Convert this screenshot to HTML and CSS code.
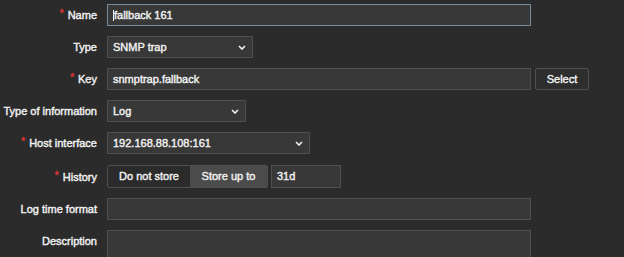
FILE: index.html
```html
<!DOCTYPE html>
<html>
<head>
<meta charset="utf-8">
<link rel="stylesheet" href="styles.css">
</head>
<body>
<form class="form">
  <div class="row">
    <label class="label"><span class="req">*</span>Name</label>
    <div class="input input-wide input-focus"><span class="caret"></span>fallback 161</div>
  </div>
  <div class="row">
    <label class="label">Type</label>
    <div class="select select-type"><span>SNMP trap</span><svg class="chev" width="8" height="5" viewBox="0 0 8 5"><path d="M1 1 L4 4 L7 1" fill="none" stroke="#f2f2f2" stroke-width="1.6"/></svg></div>
  </div>
  <div class="row">
    <label class="label"><span class="req">*</span>Key</label>
    <div class="input input-wide">snmptrap.fallback</div>
    <div class="btn">Select</div>
  </div>
  <div class="row">
    <label class="label">Type of information</label>
    <div class="select select-info"><span>Log</span><svg class="chev" width="8" height="5" viewBox="0 0 8 5"><path d="M1 1 L4 4 L7 1" fill="none" stroke="#f2f2f2" stroke-width="1.6"/></svg></div>
  </div>
  <div class="row">
    <label class="label"><span class="req">*</span>Host interface</label>
    <div class="select select-host"><span>192.168.88.108:161</span><svg class="chev" width="8" height="5" viewBox="0 0 8 5"><path d="M1 1 L4 4 L7 1" fill="none" stroke="#f2f2f2" stroke-width="1.6"/></svg></div>
  </div>
  <div class="row row-history">
    <label class="label"><span class="req">*</span>History</label>
    <div class="seg">
      <div class="seg-item">Do not store</div>
      <div class="seg-item seg-on">Store up to</div>
    </div>
    <div class="input input-short">31d</div>
  </div>
  <div class="row">
    <label class="label">Log time format</label>
    <div class="input input-wide"></div>
  </div>
  <div class="row row-top">
    <label class="label">Description</label>
    <div class="input input-wide textarea"></div>
  </div>
</form>
</body>
</html>
```

FILE: styles.css
```css
html, body {
  margin: 0;
  padding: 0;
  background: #2b2b2b;
}
body {
  font-family: "Liberation Sans", Arial, sans-serif;
  font-size: 11px;
  color: #f2f2f2;
  -webkit-text-stroke: 0.4px #f2f2f2;
}
.form {
  padding-top: 4px;
  display: flex;
  flex-direction: column;
  gap: 10px;
}
.row {
  display: flex;
  align-items: center;
  gap: 10px;
}
.row-history {
  margin-top: 1px;
}
.row-top {
  align-items: flex-start;
}
.row-top .label {
  line-height: 22px;
}
.label {
  width: 97px;
  flex: none;
  text-align: right;
  white-space: nowrap;
  color: #f2f2f2;
}
.req {
  color: #e33734;
  -webkit-text-stroke: 0.3px #e33734;
  font-size: 10px;
  position: relative;
  top: -2px;
  margin-right: 4px;
}
.input, .select, .btn {
  box-sizing: border-box;
  height: 22px;
  line-height: 20px;
  border: 1px solid #4f4f4f;
  background: #383838;
  color: #f2f2f2;
  padding: 0 5px;
  white-space: nowrap;
}
.input-wide {
  width: 424px;
}
.input-focus {
  border-color: #768d99;
}
.caret {
  display: inline-block;
  width: 1px;
  height: 11px;
  background: #f2f2f2;
  vertical-align: -2px;
}
.btn {
  margin-left: -6px;
  width: 54px;
  text-align: center;
  background: #2e2e2e;
  border-radius: 2px;
  padding: 0;
}
.select {
  display: flex;
  align-items: center;
  justify-content: space-between;
  padding: 0 6px 0 5px;
}
.chev {
  display: block;
}
.select-type { width: 146px; }
.select-info { width: 139px; }
.select-host { width: 203px; }
.seg {
  box-sizing: border-box;
  display: flex;
  height: 23px;
  border: 1px solid #4f4f4f;
  border-radius: 2px;
  overflow: hidden;
}
.seg-item {
  line-height: 21px;
  background: #2b2b2b;
  box-sizing: border-box;
  text-align: center;
}
.seg-item:first-child {
  width: 82px;
}
.seg-on {
  background: #4b4b4b;
  width: 77px;
}
.input-short {
  margin-left: -7px;
  width: 70px;
  height: 23px;
  line-height: 21px;
}
.textarea {
  height: 50px;
}
```
